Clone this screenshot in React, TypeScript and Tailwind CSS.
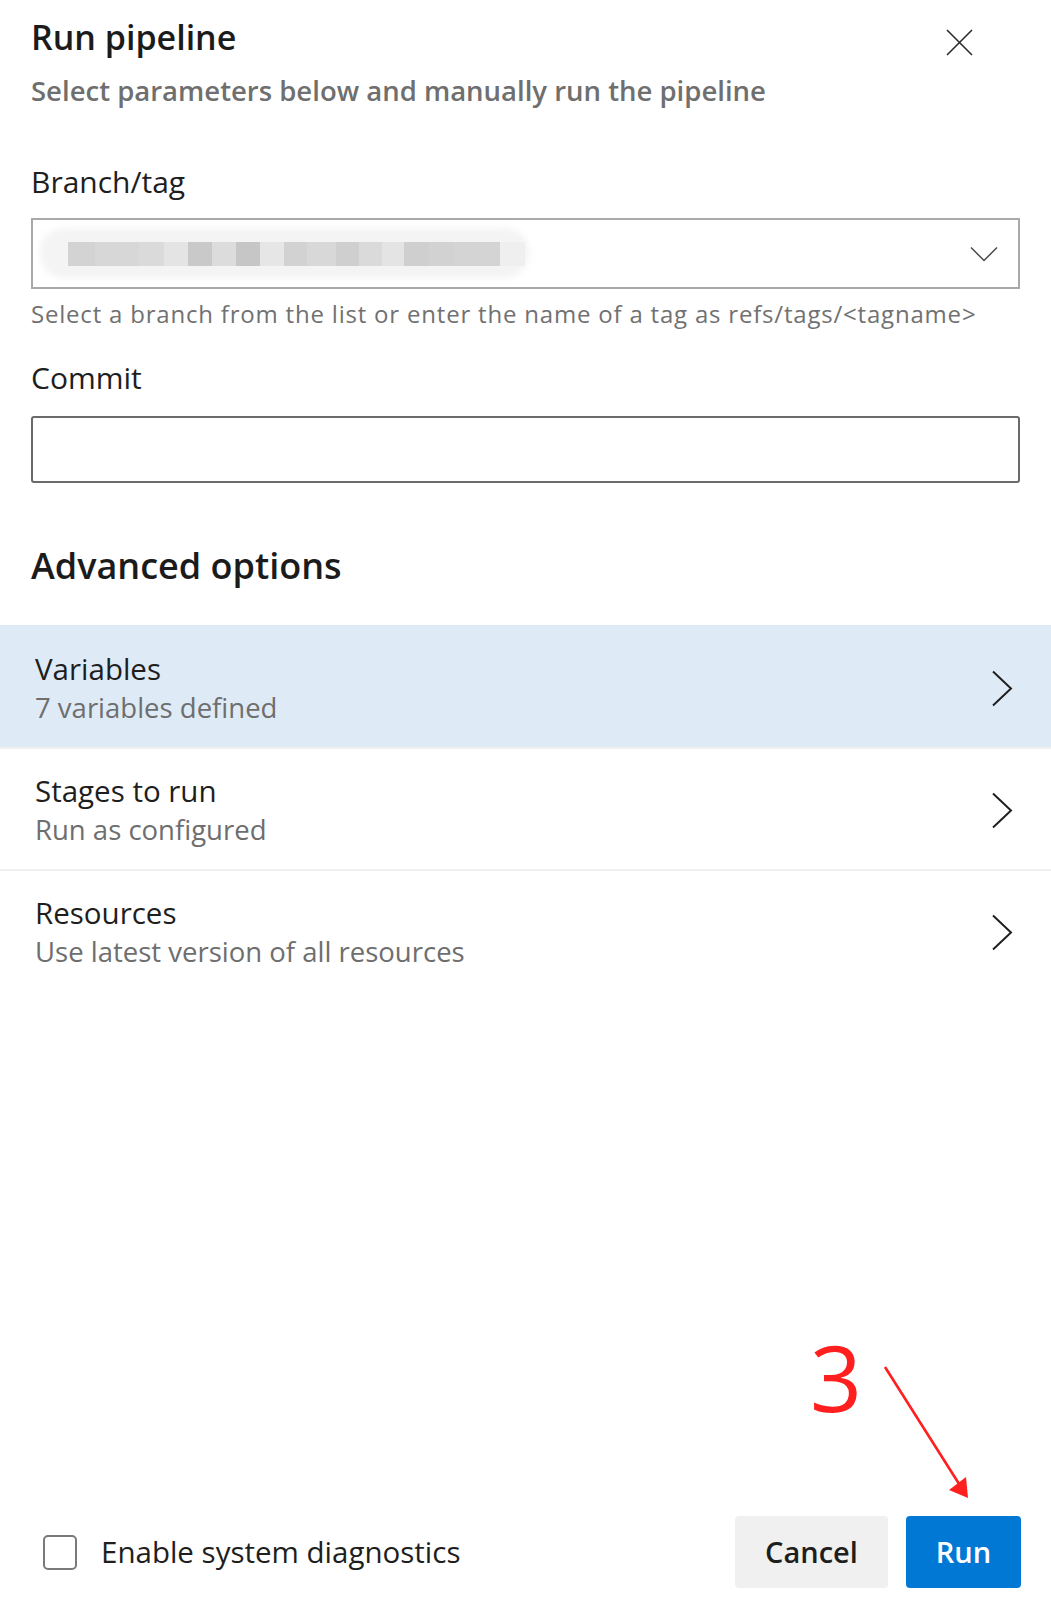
import React from 'react';

const mosaic = [
  'w-[27px] bg-[#d3d3d3]',
  'w-[44px] bg-[#d7d7d7]',
  'w-[25px] bg-[#dadada]',
  'w-[24px] bg-[#e4e4e4]',
  'w-[24px] bg-[#c9c9c9]',
  'w-[24px] bg-[#dcdcdc]',
  'w-[24px] bg-[#c6c6c6]',
  'w-[24px] bg-[#e6e6e6]',
  'w-[23px] bg-[#d2d2d2]',
  'w-[29px] bg-[#d8d8d8]',
  'w-[23px] bg-[#cfcfcf]',
  'w-[23px] bg-[#dadada]',
  'w-[22px] bg-[#e4e4e4]',
  'w-[25px] bg-[#cfcfcf]',
  'w-[25px] bg-[#d2d2d2]',
  'w-[46px] bg-[#d4d4d4]',
  'w-[25px] bg-[#efefef]',
];

function ChevronRight() {
  return (
    <svg width="22" height="37" viewBox="0 0 22 37" fill="none" stroke="#1f1f1f" strokeWidth="2">
      <path d="M2 1.5 L20 18.5 L2 35.5" />
    </svg>
  );
}

function OptionRow({ title, subtitle, active }: { title: string; subtitle: string; active?: boolean }) {
  return (
    <div
      className={
        active
          ? 'flex items-center justify-between bg-[#deebf7] pl-[35px] pr-[38px] pt-[24px] pb-[20px]'
          : 'flex items-center justify-between border-t-2 border-[#efefef] pl-[35px] pr-[38px] pt-[22px] pb-[20px]'
      }
    >
      <div className="flex flex-col">
        <div className="text-[29.5px] leading-[39px] text-[#1e1e1e]">{title}</div>
        <div className="text-[27.5px] leading-[39px] text-[#6e6e6e]">{subtitle}</div>
      </div>
      <ChevronRight />
    </div>
  );
}

export default function App() {
  return (
    <div className="relative flex min-h-[1607px] w-full flex-col bg-white font-['Open_Sans',sans-serif] text-[#1e1e1e]">
      {/* header */}
      <div className="flex items-start justify-between pl-[31px] pr-[78px] pt-[17px]">
        <div className="flex flex-col">
          <h1 className="text-[34px] font-semibold leading-[40px] text-[#1b1b1b]">Run pipeline</h1>
          <p className="mt-[17px] text-[27.5px] font-semibold leading-[34px] text-[#6f6f6f]">
            Select parameters below and manually run the pipeline
          </p>
        </div>
        <button className="mt-[12px] text-[#333]" aria-label="Close">
          <svg width="27" height="27" viewBox="0 0 27 27" stroke="#2b2b2b" strokeWidth="1.6">
            <path d="M1 1 L26 26 M26 1 L1 26" />
          </svg>
        </button>
      </div>

      {/* form */}
      <div className="flex flex-col px-[31px]">
        <label className="mt-[56px] text-[30px] leading-[36px]">Branch/tag</label>
        <div className="mt-[18px] flex h-[71px] items-center justify-between border-2 border-[#a9a9a9] pl-[35px] pr-[20px]">
          <div className="relative flex h-[24px] items-center">
            <div className="absolute -left-[28px] -right-[4px] -top-[14px] h-[50px] rounded-[24px] bg-[#f4f4f4] blur-[3px]" />
            <div className="relative flex h-[24px] blur-[0.6px]">
              {mosaic.map((c, i) => (
                <div key={i} className={`h-full ${c}`} />
              ))}
            </div>
          </div>
          <svg width="28" height="16" viewBox="0 0 28 16" fill="none" stroke="#4a4a4a" strokeWidth="1.5">
            <path d="M1 1.5 L14 14.5 L27 1.5" />
          </svg>
        </div>
        <p className="mt-[10px] text-[24px] leading-[30px] tracking-[0.8px] text-[#717171]">
          Select a branch from the list or enter the name of a tag as refs/tags/&lt;tagname&gt;
        </p>

        <label className="mt-[31px] text-[30px] leading-[36px]">Commit</label>
        <input className="mt-[20px] h-[67px] rounded-[3px] border-2 border-[#6a6a6a] px-3 text-[28px] outline-none" />

        <h2 className="mt-[62px] text-[36px] font-semibold leading-[42px] text-[#1b1b1b]">Advanced options</h2>
      </div>

      {/* options */}
      <div className="mt-[38px] flex flex-col">
        <OptionRow title="Variables" subtitle="7 variables defined" active />
        <OptionRow title="Stages to run" subtitle="Run as configured" />
        <OptionRow title="Resources" subtitle="Use latest version of all resources" />
      </div>

      {/* footer */}
      <div className="mt-auto flex items-center justify-between pb-[19px] pl-[43px] pr-[30px]">
        <label className="flex items-center">
          <span className="h-[35px] w-[34px] rounded-[5px] border-2 border-[#7a7a7a] bg-white" />
          <span className="ml-[24px] text-[29.5px] leading-[36px] text-[#1e1e1e]">Enable system diagnostics</span>
        </label>
        <div className="flex gap-[18px]">
          <button className="h-[72px] w-[153px] rounded-[4px] bg-[#f0f0f0] text-[29px] font-semibold text-[#1e1e1e]">
            Cancel
          </button>
          <button className="h-[72px] w-[115px] rounded-[4px] bg-[#0078d4] text-[29px] font-semibold text-white">
            Run
          </button>
        </div>
      </div>

      {/* annotation */}
      <div className="pointer-events-none absolute left-[810px] top-[1327px] font-['Open_Sans',sans-serif] text-[91px] font-[380] leading-[100px] text-[#ff1f1f]">
        3
      </div>
      <svg
        className="pointer-events-none absolute left-[880px] top-[1362px]"
        width="95"
        height="140"
        viewBox="880 1362 95 140"
      >
        <line x1="885" y1="1367" x2="961" y2="1487" stroke="#ff1f1f" strokeWidth="2.6" />
        <polygon points="968,1498 949,1490 966,1477" fill="#ff1f1f" />
      </svg>
    </div>
  );
}
